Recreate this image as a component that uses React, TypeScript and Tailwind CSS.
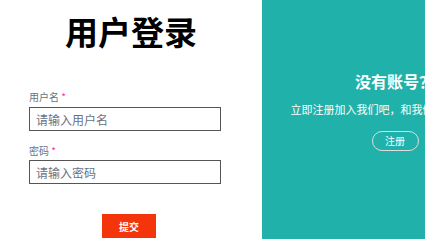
export default function App() {
    const font = { fontFamily: '"Noto Sans CJK SC", "Noto Sans", sans-serif' };

    return (
        <div className="w-[425px] h-[239px] overflow-hidden bg-white" style={font}>
            <div className="flex w-[528px] h-[239px]">
                {/* 登录 */}
                <div className="w-[262px] shrink-0 bg-white">
                    <div className="mt-[12px] text-center text-[33px] leading-[38px] font-bold text-black">用户登录</div>
                    <div className="mt-[41px] px-[29px]">
                        <div className="text-[10px] leading-[12px] text-gray-500">
                            用户名 <span className="text-pink-500">*</span>
                        </div>
                        <input
                            className="mt-[4px] block w-[192px] h-[24px] border border-[#555] px-[6px] text-[12px] text-gray-700 placeholder:text-gray-500 outline-none"
                            placeholder="请输入用户名"
                        />
                        <div className="mt-[14px] text-[10px] leading-[12px] text-gray-500">
                            密码 <span className="text-pink-500">*</span>
                        </div>
                        <input
                            type="text"
                            className="mt-[3px] block w-[192px] h-[24px] border border-[#555] px-[6px] text-[12px] text-gray-700 placeholder:text-gray-500 outline-none"
                            placeholder="请输入密码"
                        />
                    </div>
                    <button className="mt-[30px] ml-[102px] w-[54px] h-[24px] bg-[#f4340b] text-white text-[10px] font-bold">
                        提交
                    </button>
                </div>
                {/* 注册 */}
                <div className="w-[266px] shrink-0 bg-[#20b2aa] flex flex-col items-center pt-[69px] text-white">
                    <div className="text-[16px] leading-[24px] font-bold">没有账号？</div>
                    <div className="mt-[8px] text-[11px] leading-[16px] whitespace-nowrap">立即注册加入我们吧，和我们一起探索世界</div>
                    <button className="mt-[14px] w-[47px] h-[20px] rounded-full border border-[#ddd] text-[10px] leading-[18px]">
                        注册
                    </button>
                </div>
            </div>
        </div>
    );
}
